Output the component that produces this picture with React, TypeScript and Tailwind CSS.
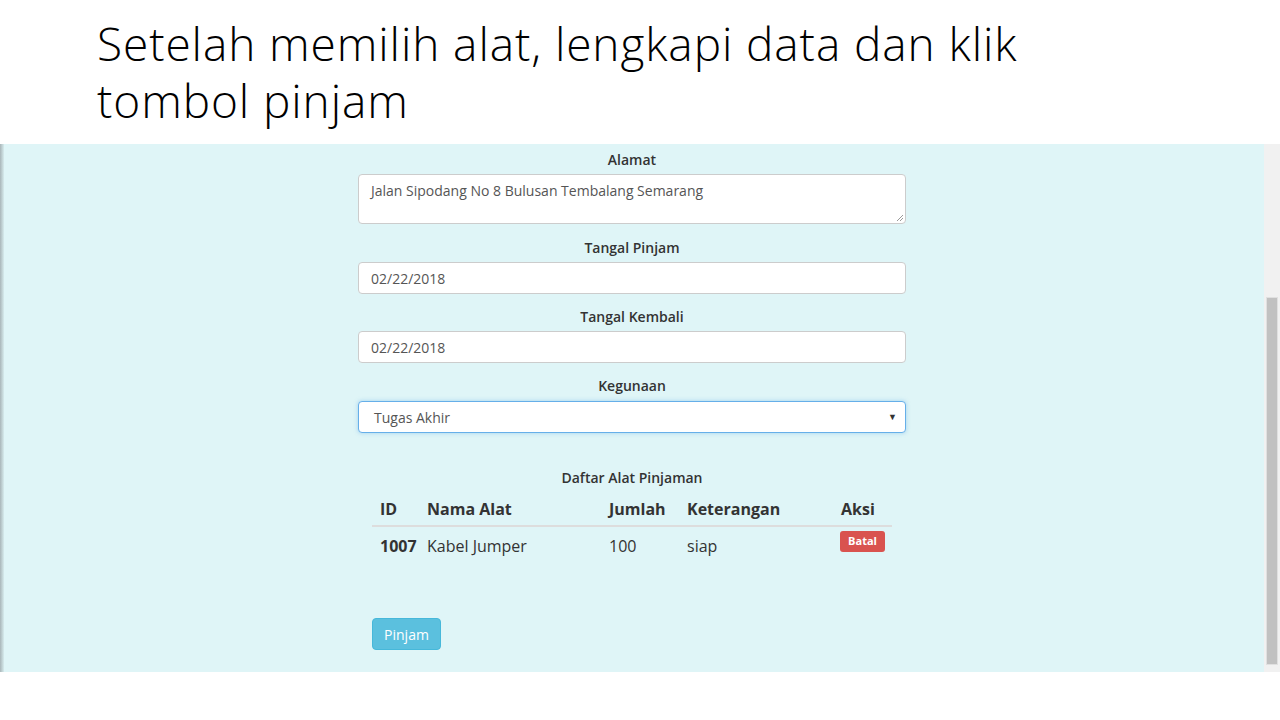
import React from "react";

const font = { fontFamily: "'Open Sans', 'Noto Sans', sans-serif" };

function Label({ children }: { children: React.ReactNode }) {
  return (
    <div className="text-center text-[14px] font-semibold leading-5 text-[#333]">{children}</div>
  );
}

function Field({ value }: { value: string }) {
  return (
    <div className="h-[32px] w-full rounded-[4px] border border-[#cccccc] bg-white px-3 flex items-center text-[14px] text-[#555]">
      {value}
    </div>
  );
}

export default function App() {
  return (
    <div className="w-[1280px] h-[720px] bg-white flex flex-col overflow-hidden">
      <div className="h-[144px] pl-[97px] pt-[15px]">
        <h1
          className="text-[46px] leading-[57px] font-light text-black tracking-[0.9px]"
          style={{ fontFamily: "'Open Sans', 'Noto Sans', sans-serif" }}
        >
          Setelah memilih alat, lengkapi data dan klik
          <br />
          tombol pinjam
        </h1>
      </div>
      <div className="h-[528px] flex bg-[#dff5f7]" style={font}>
        <div className="w-[4px] bg-gradient-to-r from-[#a9b6b9] to-[#d7ecee]" />
        <div className="flex-1">
          <div className="w-[548px] ml-[354px] pt-[6px] flex flex-col">
            <Label>Alamat</Label>
            <div className="mt-[4px] h-[50px] relative rounded-[4px] border border-[#cccccc] bg-white px-3 pt-[5px] text-[14px] text-[#555]">
              Jalan Sipodang No 8 Bulusan Tembalang Semarang
              <svg className="absolute right-[1px] bottom-[1px]" width="9" height="9" viewBox="0 0 9 9">
                <path d="M8 2 L2 8 M8 5 L5 8" stroke="#999" strokeWidth="1" />
              </svg>
            </div>
            <div className="mt-[14px]">
              <Label>Tangal Pinjam</Label>
            </div>
            <div className="mt-[4px]">
              <Field value="02/22/2018" />
            </div>
            <div className="mt-[13px]">
              <Label>Tangal Kembali</Label>
            </div>
            <div className="mt-[4px]">
              <Field value="02/22/2018" />
            </div>
            <div className="mt-[13px]">
              <Label>Kegunaan</Label>
            </div>
            <div className="mt-[5px] h-[32px] rounded-[4px] border border-[#66afe9] bg-white pl-[15px] pr-[8px] flex items-center justify-between text-[14px] text-[#555] shadow-[0_0_4px_rgba(102,175,233,0.5)]">
              <span>Tugas Akhir</span>
              <span className="text-[9px] text-[#333]">▼</span>
            </div>
            <div className="mt-[35px] text-center text-[14px] font-semibold leading-5 text-[#333]">
              Daftar Alat Pinjaman
            </div>
            <div className="mx-[14px] mt-[4px]">
              <div className="flex h-[35px] items-center border-b-2 border-[#dddddd] text-[16px] font-bold text-[#333]">
                <div className="w-[47px] pl-[8px]">ID</div>
                <div className="w-[182px] pl-[8px]">Nama Alat</div>
                <div className="w-[78px] pl-[8px]">Jumlah</div>
                <div className="w-[154px] pl-[8px]">Keterangan</div>
                <div className="flex-1 pl-[8px]">Aksi</div>
              </div>
              <div className="flex h-[37px] text-[16px] text-[#333]">
                <div className="w-[47px] pl-[8px] pt-[7px] font-bold">1007</div>
                <div className="w-[182px] pl-[8px] pt-[7px]">Kabel Jumper</div>
                <div className="w-[78px] pl-[8px] pt-[7px]">100</div>
                <div className="w-[154px] pl-[8px] pt-[7px]">siap</div>
                <div className="flex-1 pl-[7px] pt-0">
                  <div className="inline-flex h-[21px] w-[45px] items-center justify-center rounded-[3px] bg-[#d9534f] text-[11px] font-bold text-white">
                    Batal
                  </div>
                </div>
              </div>
            </div>
            <div className="mx-[14px] mt-[54px]">
              <div className="inline-flex h-[32px] w-[69px] items-center justify-center rounded-[4px] border border-[#46b8da] bg-[#5bc0de] text-[14px] text-white">
                Pinjam
              </div>
            </div>
          </div>
        </div>
        <div className="w-[16px] bg-[#f1f1f1] flex flex-col">
          <div className="h-[153px]" />
          <div className="mx-[2px] h-[368px] bg-[#c1c1c1] border border-[#e0e0e0]" />
        </div>
      </div>
    </div>
  );
}
